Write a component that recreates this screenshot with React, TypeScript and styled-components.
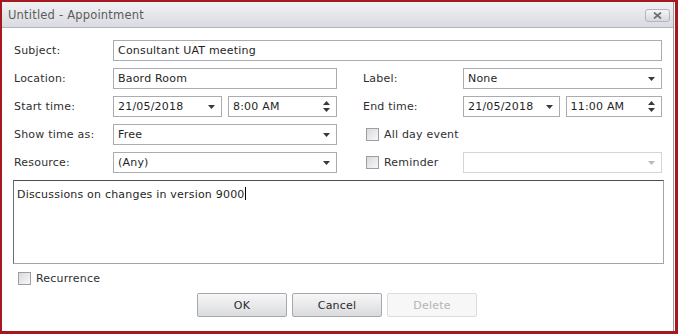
import styled, { createGlobalStyle } from 'styled-components';

const GlobalStyle = createGlobalStyle`
  html, body {
    margin: 0;
    padding: 0;
    background: #ffffff;
  }
  body {
    font-family: "DejaVu Sans", Verdana, sans-serif;
    font-size: 11px;
    letter-spacing: 0.2px;
    color: #2b2b2b;
  }
`;

const Window = styled.div`
  width: 678px;
  height: 334px;
  box-sizing: border-box;
  border-style: solid;
  border-color: #a5181f;
  border-width: 2px 3px 3px 2px;
  padding-right: 1px;
  background: #ffffff;
  display: flex;
`;

const Frame = styled.div`
  flex: 1;
  display: flex;
  flex-direction: column;
  border-right: 1px solid #9a9a9a;
`;

const TitleBar = styled.div`
  height: 25px;
  flex: none;
  display: flex;
  align-items: center;
  justify-content: space-between;
  padding: 0 3px 0 6px;
  background: linear-gradient(#f1f2f4, #d9dbe0);
  border-bottom: 1px solid #b4b6bb;
  color: #5c5c5c;
  font-size: 11.5px;
`;

const CloseButton = styled.div`
  width: 25px;
  height: 13px;
  box-sizing: border-box;
  border: 1px solid #b3b5b9;
  border-radius: 3px;
  background: linear-gradient(#f4f5f6, #d6d8db);
  display: flex;
  align-items: center;
  justify-content: center;
  margin-top: 1px;
`;

const Body = styled.div`
  flex: 1;
  display: flex;
  flex-direction: column;
  padding: 12px 9px 0 12px;
`;

const FormGrid = styled.div`
  display: grid;
  grid-template-columns: 99px 224px 26px 100px 199px;
  grid-auto-rows: 21px;
  row-gap: 7px;
  align-items: center;
`;

const Label = styled.div<{ $col?: number }>`
  grid-column: ${(p) => p.$col ?? 1};
  white-space: nowrap;
  color: #2f2f2f;
`;

const Field = styled.div<{ $span?: string; $disabled?: boolean }>`
  grid-column: ${(p) => p.$span ?? 'auto'};
  height: 21px;
  box-sizing: border-box;
  border: 1px solid ${(p) => (p.$disabled ? '#d4d5d9' : '#aaacb1')};
  background: #ffffff;
  display: flex;
  align-items: center;
  padding: 0 6px 0 4px;
  color: #1f1f1f;
  min-width: 0;
`;

const FieldText = styled.span`
  flex: 1;
  white-space: nowrap;
  overflow: hidden;
`;

const Pair = styled.div<{ $col: number }>`
  grid-column: ${(p) => p.$col};
  display: flex;
  gap: 6px;
  & > * {
    flex: 1;
  }
`;

const CheckRow = styled.label<{ $col?: number; $indent?: number }>`
  grid-column: ${(p) => p.$col ?? 'auto'};
  display: flex;
  align-items: center;
  gap: 5px;
  padding-left: ${(p) => p.$indent ?? 0}px;
  color: #2f2f2f;
`;

const Box = styled.span`
  width: 13px;
  height: 13px;
  box-sizing: border-box;
  border: 1px solid #9c9ea3;
  background: linear-gradient(135deg, #d9dadd, #f7f7f8);
  flex: none;
`;

const Notes = styled.div`
  margin: 7px 0 0 -1px;
  height: 84px;
  box-sizing: border-box;
  border-style: solid;
  border-width: 1px;
  border-color: #4b4c55 #a3a4a9 #a3a4a9 #6c6d74;
  padding: 6px 3px;
  color: #1f1f1f;
`;

const Caret = styled.span`
  display: inline-block;
  width: 1px;
  height: 13px;
  background: #000000;
  vertical-align: -2px;
`;

const Footer = styled.div`
  display: flex;
  flex-direction: column;
  padding-top: 8px;
  gap: 8px;
`;

const Buttons = styled.div`
  display: flex;
  justify-content: center;
  gap: 5px;
  padding-right: 4px;
`;

const Button = styled.div<{ $disabled?: boolean }>`
  width: 90px;
  height: 24px;
  box-sizing: border-box;
  border: 1px solid ${(p) => (p.$disabled ? '#dcdcde' : '#a6a8ac')};
  border-radius: 2px;
  background: ${(p) => (p.$disabled ? '#f7f7f8' : 'linear-gradient(#f7f7f8, #dadbde)')};
  color: ${(p) => (p.$disabled ? '#b4b4b4' : '#2b2b2b')};
  display: flex;
  align-items: center;
  justify-content: center;
`;

const DropArrow = ({ light }: { light?: boolean }) => (
  <svg width="7" height="4" viewBox="0 0 7 4">
    <path d="M0 0h7L3.5 4z" fill={light ? '#b9babd' : '#3a3a3a'} />
  </svg>
);

const Spinner = () => (
  <svg width="7" height="11" viewBox="0 0 7 11">
    <path d="M3.5 0L7 4H0z M0 7h7L3.5 11z" fill="#3a3a3a" />
  </svg>
);

const CloseGlyph = () => (
  <svg width="9" height="7" viewBox="0 0 9 7">
    <path d="M1 0.5L8 6.5M8 0.5L1 6.5" stroke="#6f7176" strokeWidth="1.8" />
  </svg>
);

const Combo = ({ text, span, disabled }: { text: string; span?: string; disabled?: boolean }) => (
  <Field $span={span} $disabled={disabled}>
    <FieldText>{text}</FieldText>
    <DropArrow light={disabled} />
  </Field>
);

const App = () => (
  <>
    <GlobalStyle />
    <Window>
      <Frame>
        <TitleBar>
          <span>Untitled - Appointment</span>
          <CloseButton>
            <CloseGlyph />
          </CloseButton>
        </TitleBar>
        <Body>
          <FormGrid>
            <Label>Subject:</Label>
            <Field $span="2 / 6">
              <FieldText>Consultant UAT meeting</FieldText>
            </Field>

            <Label>Location:</Label>
            <Field $span="2">
              <FieldText>Baord Room</FieldText>
            </Field>
            <Label $col={4}>Label:</Label>
            <Combo text="None" span="5" />

            <Label>Start time:</Label>
            <Pair $col={2}>
              <Combo text="21/05/2018" />
              <Field>
                <FieldText>8:00 AM</FieldText>
                <Spinner />
              </Field>
            </Pair>
            <Label $col={4}>End time:</Label>
            <Pair $col={5}>
              <Combo text="21/05/2018" />
              <Field>
                <FieldText>11:00 AM</FieldText>
                <Spinner />
              </Field>
            </Pair>

            <Label>Show time as:</Label>
            <Combo text="Free" span="2" />
            <CheckRow $col={4} $indent={3}>
              <Box />
              All day event
            </CheckRow>

            <Label>Resource:</Label>
            <Combo text="(Any)" span="2" />
            <CheckRow $col={4} $indent={3}>
              <Box />
              Reminder
            </CheckRow>
            <Combo text="" span="5" disabled />
          </FormGrid>

          <Notes>
            Discussions on changes in version 9000
            <Caret />
          </Notes>

          <Footer>
            <CheckRow $indent={4}>
              <Box />
              Recurrence
            </CheckRow>
            <Buttons>
              <Button>OK</Button>
              <Button>Cancel</Button>
              <Button $disabled>Delete</Button>
            </Buttons>
          </Footer>
        </Body>
      </Frame>
    </Window>
  </>
);

export default App;
